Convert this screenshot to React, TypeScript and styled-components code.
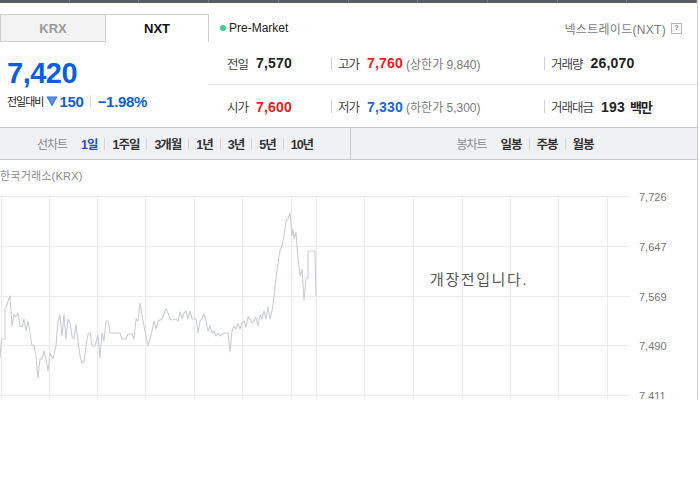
import React from "react";
import styled, { createGlobalStyle } from "styled-components";

const GlobalStyle = createGlobalStyle`
  html, body { margin: 0; padding: 0; background: #fff; }
  body { font-family: "Liberation Sans", "Noto Sans CJK KR", sans-serif; }
  * { box-sizing: border-box; }
`;

const Wrapper = styled.div`
  width: 698px;
  border-right: 1px solid #c9cbd0;
`;

const TopBar = styled.div`
  display: flex;
  height: 3px;
  background: #585d65;
`;

const TopCell = styled.div`
  width: 70px;
  height: 3px;
  border-right: 1px solid #7a7f87;
`;

const HeadRow = styled.div`
  display: flex;
  align-items: center;
  margin-top: 11px;
  height: 28px;
`;

const Tabs = styled.div`
  display: flex;
  width: 209px;
  height: 28px;
`;

const Tab = styled.div<{ $active?: boolean }>`
  display: flex;
  align-items: center;
  justify-content: center;
  height: 28px;
  width: ${(p) => (p.$active ? "103px" : "106px")};
  font-size: 13px;
  font-weight: bold;
  color: ${(p) => (p.$active ? "#111" : "#9a9a9a")};
  background: ${(p) => (p.$active ? "#fff" : "#f3f3f3")};
  border-top: 1px solid #cfcfcf;
  border-right: 1px solid #cfcfcf;
  border-left: ${(p) => (p.$active ? "none" : "1px solid #cfcfcf")};
  border-bottom: ${(p) => (p.$active ? "none" : "1px solid #cfcfcf")};
`;

const Status = styled.div`
  display: flex;
  align-items: center;
  flex: 1;
  padding-left: 11px;
  font-size: 12px;
  color: #222;
`;

const Dot = styled.span`
  width: 6px;
  height: 6px;
  border-radius: 50%;
  background: #3ccb9a;
  margin-right: 3px;
`;

const Provider = styled.div`
  display: flex;
  align-items: center;
  font-size: 12px;
  color: #7a7a7a;
  padding-right: 15px;
  letter-spacing: 0.3px;
`;

const HelpIcon = styled.span`
  display: inline-flex;
  align-items: center;
  justify-content: center;
  width: 11px;
  height: 11px;
  margin-left: 5px;
  border: 1px solid #b5b5b5;
  font-size: 8px;
  font-weight: bold;
  color: #888;
  line-height: 1;
`;

const InfoArea = styled.div`
  display: flex;
  height: 85px;
`;

const PriceBox = styled.div`
  width: 208px;
  padding: 14px 0 0 7px;
`;

const Price = styled.div`
  font-size: 29px;
  font-weight: bold;
  color: #0c5ed9;
  line-height: 34px;
  letter-spacing: -0.5px;
`;

const ChangeLine = styled.div`
  display: flex;
  align-items: center;
  margin-top: 2px;
  height: 18px;
`;

const ChangeLabel = styled.span`
  font-size: 11px;
  color: #222;
  letter-spacing: -1px;
  margin-right: 3px;
`;

const DownArrow = styled.svg`
  width: 12px;
  height: 12px;
  margin-right: 1px;
`;

const ChangeValue = styled.span`
  font-size: 15px;
  font-weight: bold;
  color: #0c5ed9;
  letter-spacing: -0.3px;
`;

const ChangeSep = styled.span`
  width: 1px;
  height: 12px;
  background: #d6d6d6;
  margin: 0 7px 0 6px;
`;

const Stats = styled.div`
  flex: 1;
  display: flex;
  flex-direction: column;
`;

const StatRow = styled.div<{ $first?: boolean }>`
  display: flex;
  align-items: center;
  height: ${(p) => (p.$first ? "43px" : "42px")};
  border-bottom: ${(p) => (p.$first ? "1px solid #e6e6e6" : "none")};
  padding-top: ${(p) => (p.$first ? "0" : "1px")};
`;

const StatCell = styled.div<{ $w?: number }>`
  display: flex;
  align-items: center;
  width: ${(p) => (p.$w ? `${p.$w}px` : "auto")};
  flex: ${(p) => (p.$w ? "none" : "1")};
`;

const FirstPad = styled.span`
  width: 19px;
`;

const CellSep = styled.span`
  width: 1px;
  height: 13px;
  background: #d0d0d0;
  margin-right: 6px;
`;

const Label = styled.span`
  font-size: 12.5px;
  color: #444;
  letter-spacing: -1px;
`;

const Value = styled.span<{ $color?: string }>`
  font-size: 14px;
  font-weight: bold;
  margin-left: 8px;
  color: ${(p) => p.$color || "#222"};
  letter-spacing: 0.2px;
`;

const Unit = styled.span`
  font-size: 13px;
  letter-spacing: -1.2px;
  margin-left: 1px;
`;

const Note = styled.span`
  font-size: 12px;
  color: #7a7a7a;
  margin-left: 3px;
`;

const Toolbar = styled.div`
  display: flex;
  height: 33px;
  background: #f0f1f5;
  border-top: 1px solid #c8c9cd;
  border-bottom: 1px solid #c8c9cd;
`;

const ToolHalf = styled.div<{ $left?: boolean }>`
  display: flex;
  align-items: center;
  justify-content: center;
  width: ${(p) => (p.$left ? "351px" : "auto")};
  flex: ${(p) => (p.$left ? "none" : "1")};
  border-right: ${(p) => (p.$left ? "1px solid #c8c9cd" : "none")};
  padding-left: ${(p) => (p.$left ? "0" : "2px")};
`;

const ToolLabel = styled.span`
  font-size: 12px;
  color: #8a8a8a;
  letter-spacing: -1px;
  margin-right: 14px;
`;

const ToolItem = styled.span<{ $active?: boolean }>`
  font-size: 12.5px;
  font-weight: bold;
  letter-spacing: -1px;
  color: ${(p) => (p.$active ? "#2a4fb3" : "#333")};
`;

const ToolSep = styled.span`
  width: 1px;
  height: 12px;
  background: #d6d7db;
  margin: 0 7px;
`;

const Caption = styled.div`
  font-size: 11px;
  color: #8a8a8a;
  height: 26px;
  padding-top: 9px;
  line-height: 14px;
  letter-spacing: 0.2px;
`;

const ChartArea = styled.div`
  position: relative;
  height: 213px;
  overflow: hidden;
`;

const ChartSvg = styled.svg`
  display: block;
`;

const Notice = styled.div`
  position: absolute;
  left: 430px;
  top: 84px;
  font-size: 15px;
  color: #555;
  letter-spacing: 1.6px;
  line-height: 20px;
`;

const pts: [number, number][] = [
  [0, 357], [1.5, 338], [5, 338], [5, 307], [7, 304], [8, 300], [10, 295], [12, 325], [14, 313],
  [16, 316], [18, 312], [20, 325], [22, 326], [24, 318], [26, 330], [28, 320], [30, 332],
  [32, 345], [34, 344], [36, 355], [37, 367], [38, 377], [39, 367], [40, 358], [42, 358],
  [44, 350], [46, 358], [48, 370], [50, 352], [53, 358], [56, 345], [58, 320], [60, 314],
  [62, 335], [64, 313], [66, 338], [68, 318], [70, 322], [72, 335], [74, 338], [76, 323],
  [78, 340], [80, 355], [82, 362], [84, 360], [86, 345], [88, 333], [90, 332], [92, 345],
  [95, 345], [98, 334], [100, 357], [102, 332], [104, 340], [106, 320], [108, 320], [110, 332],
  [115, 332], [120, 332], [122, 338], [126, 338], [128, 333], [132, 333], [134, 338],
  [136, 318], [138, 320], [140, 302], [142, 315], [144, 325], [146, 335], [148, 345], [150, 338],
  [152, 330], [154, 320], [156, 328], [158, 320], [162, 318], [166, 308], [168, 312], [170, 318],
  [172, 319], [176, 318], [178, 320], [180, 311], [182, 318], [184, 312], [186, 310], [188, 318],
  [190, 310], [192, 318], [196, 318], [198, 332], [200, 320], [202, 318], [204, 313], [206, 320],
  [208, 330], [210, 325], [212, 332], [214, 330], [216, 335], [218, 332], [220, 335], [224, 332],
  [228, 332], [230, 351], [232, 330], [234, 325], [236, 328], [238, 322], [240, 328], [242, 322],
  [244, 320], [246, 326], [248, 316], [250, 318], [252, 322], [254, 320], [256, 316], [258, 325],
  [260, 314], [262, 318], [264, 310], [266, 318], [268, 306], [270, 318], [272, 310], [274, 296],
  [276, 277], [278, 262], [280, 250], [282, 244], [284, 235], [286, 220], [288, 218], [290, 212],
  [292, 235], [293, 228], [294, 238], [296, 231], [298, 258], [300, 275], [302, 268], [304, 299],
  [306, 278], [308, 276], [308, 250], [315, 250], [316, 295],
];

const hLines = [195, 245, 295, 344, 394];
const yLabels = ["7,726", "7,647", "7,569", "7,490", "7,411"];
const vLines = [1, 49, 97, 145, 194, 242, 291, 316, 364, 413, 462, 510, 558, 607];

function PriceChart() {
  const top = 185;
  const path = pts.map(([x, y]) => `${x},${y - top}`).join(" ");
  return (
    <ChartSvg width={697} height={213} viewBox="0 0 697 213">
      {hLines.map((y) => (
        <line key={"h" + y} x1={0} x2={630} y1={y - top + 0.5} y2={y - top + 0.5} stroke="#ebebeb" strokeWidth={1} />
      ))}
      {vLines.map((x) => (
        <line key={"v" + x} x1={x + 0.5} x2={x + 0.5} y1={195 - top} y2={213} stroke="#ebebeb" strokeWidth={1} />
      ))}
      <polyline points={path} fill="none" stroke="#c9cdd3" strokeWidth={1.1} strokeLinejoin="round" />
      {hLines.map((y, i) => (
        <text
          key={"t" + y}
          x={639}
          y={y - top + 5}
          fontSize={11}
          fill="#777"
          fontFamily="Liberation Sans, sans-serif"
        >
          {yLabels[i]}
        </text>
      ))}
    </ChartSvg>
  );
}

export default function App() {
  return (
    <>
      <GlobalStyle />
      <Wrapper>
        <TopBar>
          {Array.from({ length: 10 }).map((_, i) => (
            <TopCell key={i} />
          ))}
        </TopBar>
        <HeadRow>
          <Tabs>
            <Tab>KRX</Tab>
            <Tab $active>NXT</Tab>
          </Tabs>
          <Status>
            <Dot />
            Pre-Market
          </Status>
          <Provider>
            넥스트레이드(NXT)
            <HelpIcon>?</HelpIcon>
          </Provider>
        </HeadRow>
        <InfoArea>
          <PriceBox>
            <Price>7,420</Price>
            <ChangeLine>
              <ChangeLabel>전일대비</ChangeLabel>
              <DownArrow viewBox="0 0 12 12">
                <path d="M0.5 1.5 H11.5 L6 11.5 Z" fill="#2a66d6" />
                <path d="M1.8 2.3 H10.2 L6 9.8 Z" fill="#5b8fe6" />
              </DownArrow>
              <ChangeValue>150</ChangeValue>
              <ChangeSep />
              <ChangeValue>−1.98%</ChangeValue>
            </ChangeLine>
          </PriceBox>
          <Stats>
            <StatRow $first>
              <StatCell $w={123}>
                <FirstPad />
                <Label>전일</Label>
                <Value>7,570</Value>
              </StatCell>
              <StatCell $w={213}>
                <CellSep />
                <Label>고가</Label>
                <Value $color="#f01a1a">7,760</Value>
                <Note>(상한가 9,840)</Note>
              </StatCell>
              <StatCell>
                <CellSep />
                <Label>거래량</Label>
                <Value>26,070</Value>
              </StatCell>
            </StatRow>
            <StatRow>
              <StatCell $w={123}>
                <FirstPad />
                <Label>시가</Label>
                <Value $color="#f01a1a">7,600</Value>
              </StatCell>
              <StatCell $w={213}>
                <CellSep />
                <Label>저가</Label>
                <Value $color="#1a66dc">7,330</Value>
                <Note>(하한가 5,300)</Note>
              </StatCell>
              <StatCell>
                <CellSep />
                <Label>거래대금</Label>
                <Value>
                  193 <Unit>백만</Unit>
                </Value>
              </StatCell>
            </StatRow>
          </Stats>
        </InfoArea>
        <Toolbar>
          <ToolHalf $left>
            <ToolLabel>선차트</ToolLabel>
            <ToolItem $active>1일</ToolItem>
            <ToolSep />
            <ToolItem>1주일</ToolItem>
            <ToolSep />
            <ToolItem>3개월</ToolItem>
            <ToolSep />
            <ToolItem>1년</ToolItem>
            <ToolSep />
            <ToolItem>3년</ToolItem>
            <ToolSep />
            <ToolItem>5년</ToolItem>
            <ToolSep />
            <ToolItem>10년</ToolItem>
          </ToolHalf>
          <ToolHalf>
            <ToolLabel>봉차트</ToolLabel>
            <ToolItem>일봉</ToolItem>
            <ToolSep />
            <ToolItem>주봉</ToolItem>
            <ToolSep />
            <ToolItem>월봉</ToolItem>
          </ToolHalf>
        </Toolbar>
        <Caption>한국거래소(KRX)</Caption>
        <ChartArea>
          <PriceChart />
          <Notice>개장전입니다.</Notice>
        </ChartArea>
      </Wrapper>
    </>
  );
}
